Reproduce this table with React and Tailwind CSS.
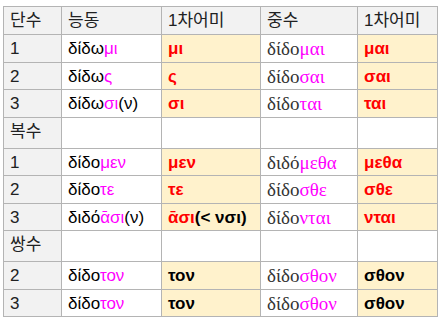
const M = ({ children }) => <span className="text-[#ff00ff]">{children}</span>
const R = ({ children }) => <span className="font-bold text-[#ff0000]">{children}</span>
const B = ({ children }) => <span className="font-bold text-black">{children}</span>

const rows = [
  { n: '1', act: <>δίδω<M>μι</M></>, e1: <R>μι</R>, mid: <>δίδο<M>μαι</M></>, e2: <R>μαι</R> },
  { n: '2', act: <>δίδω<M>ς</M></>, e1: <R>ς</R>, mid: <>δίδο<M>σαι</M></>, e2: <R>σαι</R> },
  { n: '3', act: <>δίδω<M>σι</M>(ν)</>, e1: <R>σι</R>, mid: <>δίδο<M>ται</M></>, e2: <R>ται</R> },
  { section: '복수' },
  { n: '1', act: <>δίδο<M>μεν</M></>, e1: <R>μεν</R>, mid: <>διδό<M>μεθα</M></>, e2: <R>μεθα</R> },
  { n: '2', act: <>δίδο<M>τε</M></>, e1: <R>τε</R>, mid: <>δίδο<M>σθε</M></>, e2: <R>σθε</R> },
  { n: '3', act: <>διδό<M>ᾱσι</M>(ν)</>, e1: <><R>ᾱσι</R><B>(&lt; νσι)</B></>, mid: <>δίδο<M>νται</M></>, e2: <R>νται</R> },
  { section: '쌍수' },
  { n: '2', act: <>δίδο<M>τον</M></>, e1: <B>τον</B>, mid: <>δίδο<M>σθον</M></>, e2: <B>σθον</B> },
  { n: '3', act: <>δίδο<M>τον</M></>, e1: <B>τον</B>, mid: <>δίδο<M>σθον</M></>, e2: <B>σθον</B> },
]

const cell = 'border border-[#b4b4b4] px-[6px] pt-[3px] align-top whitespace-nowrap'

export default function App() {
  return (
    <div className="min-h-screen bg-white pl-[3px] pt-[6px] font-['Liberation_Sans','Noto_Sans_CJK_KR',sans-serif] text-[17px] leading-[21px] text-[#202122]">
      <table className="table-fixed border-collapse">
        <thead>
          <tr className="h-[28px] bg-[#f2f2f2] text-left">
            <th className={`${cell} w-[58px] font-normal`}>단수</th>
            <th className={`${cell} w-[100px] font-normal`}>능동</th>
            <th className={`${cell} w-[99px] font-normal`}>1차어미</th>
            <th className={`${cell} w-[97px] font-normal`}>중수</th>
            <th className={`${cell} w-[80px] font-normal`}>1차어미</th>
          </tr>
        </thead>
        <tbody>
          {rows.map((r, i) =>
            r.section ? (
              <tr key={i} className="h-[31px]">
                <td className={`${cell} bg-[#f2f2f2]`}>{r.section}</td>
                <td className={cell}></td>
                <td className={cell}></td>
                <td className={cell}></td>
                <td className={cell}></td>
              </tr>
            ) : (
              <tr key={i} className="h-[27.5px]">
                <td className={`${cell} bg-[#f2f2f2]`}>{r.n}</td>
                <td className={`${cell} text-black`}>{r.act}</td>
                <td className={`${cell} bg-[#fff2cc]`}>{r.e1}</td>
                <td className={`${cell} font-['Liberation_Serif',serif] text-[19px] text-[#333]`}>{r.mid}</td>
                <td className={`${cell} bg-[#fff2cc]`}>{r.e2}</td>
              </tr>
            )
          )}
        </tbody>
      </table>
    </div>
  )
}
